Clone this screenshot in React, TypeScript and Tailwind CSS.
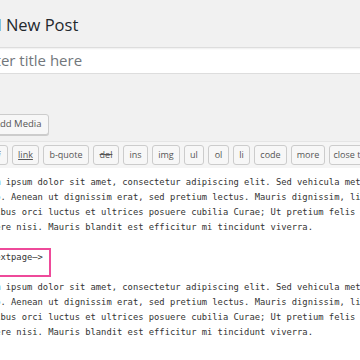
import React from 'react';

const tags = [
  { label: 'b', w: 'w-[20px]', extra: 'font-bold' },
  { label: 'i', w: 'w-[17px]', extra: 'italic' },
  { label: 'link', w: 'w-[27px]', extra: 'underline' },
  { label: 'b-quote', w: 'w-[46px]', extra: '' },
  { label: 'del', w: 'w-[26px]', extra: 'line-through' },
  { label: 'ins', w: 'w-[25px]', extra: '' },
  { label: 'img', w: 'w-[28px]', extra: '' },
  { label: 'ul', w: 'w-[20px]', extra: '' },
  { label: 'ol', w: 'w-[21px]', extra: '' },
  { label: 'li', w: 'w-[17px]', extra: '' },
  { label: 'code', w: 'w-[33px]', extra: '' },
  { label: 'more', w: 'w-[34px]', extra: '' },
  { label: 'close tags', w: 'w-[50px]', extra: '' },
];

const Paragraph: React.FC = () => (
  <>
    <div>
      <span className="text-[#3b8ad9]">Lorem</span> ipsum dolor sit amet, consectetur adipiscing elit. Sed vehicula metus ac magna
    </div>
    <div>justo. Aenean ut dignissim erat, sed pretium lectus. Mauris dignissim, ligula in</div>
    <div>faucibus orci luctus et ultrices posuere cubilia Curae; Ut pretium felis at</div>
    <div>posuere nisi. Mauris blandit est efficitur mi tincidunt viverra.</div>
  </>
);

const App: React.FC = () => {
  return (
    <div className="relative w-[360px] h-[360px] overflow-hidden bg-[#f1f1f1]">
      <div className="ml-[-33px] w-[480px] flex flex-col">
        {/* page title */}
        <h1 className="pt-[15px] pl-[4px] text-[16.5px] leading-[20px] text-[#23282d] font-['Open_Sans',sans-serif]">
          Add New Post
        </h1>

        {/* title field */}
        <div className="mt-[12px] h-[27px] bg-white border border-[#ddd] shadow-[inset_0_1px_2px_rgba(0,0,0,0.07)] flex items-center pl-[10px]">
          <span className="text-[15px] text-[#72777c] font-['Open_Sans',sans-serif]">Enter title here</span>
        </div>

        {/* add media */}
        <div className="mt-[40px] flex">
          <button className="h-[21px] px-[7px] flex items-center gap-[5px] bg-[#f7f7f7] border border-[#ccc] rounded-[3px] shadow-[0_1px_0_#ccc] text-[9.5px] text-[#555] font-['Open_Sans',sans-serif]">
            <svg width="14" height="12" viewBox="0 0 20 16" fill="#82878c">
              <path d="M2 2h11v3l4-2v10l-4-2v3H2z" />
            </svg>
            Add Media
          </button>
        </div>

        {/* quicktags toolbar */}
        <div className="mt-[6px] border-t border-[#e5e5e5] bg-[#f5f5f5] pt-[3px] pb-[3px] flex gap-[4px]">
          {tags.map((t) => (
            <div
              key={t.label}
              className={`${t.w} h-[20px] shrink-0 flex items-center justify-center bg-[#f7f7f7] border border-[#ccc] rounded-[3px] text-[9px] text-[#555] font-['Open_Sans',sans-serif] whitespace-nowrap ${t.extra}`}
            >
              {t.label}
            </div>
          ))}
        </div>

        {/* text area */}
        <div className="bg-white h-[300px] pt-[7px] pl-[7px] whitespace-pre text-[8.8px] leading-[15px] text-[#333] font-['DejaVu_Sans_Mono',monospace]">
          <Paragraph />
          <div>&nbsp;</div>
          <div>{'<!–nextpage–>'}</div>
          <div>&nbsp;</div>
          <Paragraph />
        </div>
      </div>

      {/* highlight annotation */}
      <div className="absolute left-[-10px] top-[248px] w-[61px] h-[29px] border-2 border-[#ee4a9a]" />
    </div>
  );
};

export default App;
